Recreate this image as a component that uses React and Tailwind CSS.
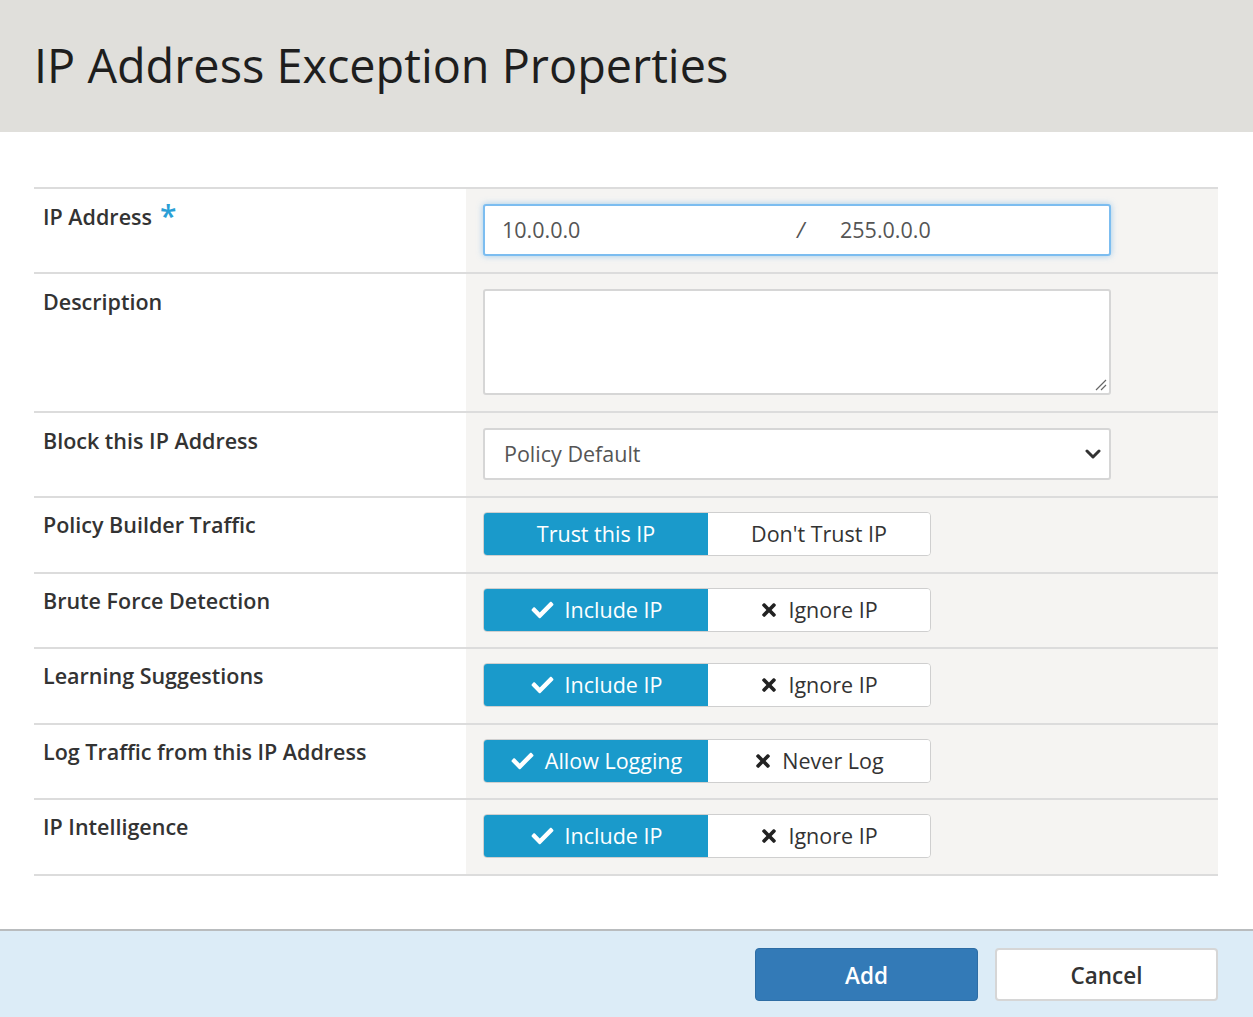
import React from "react";
import { FaCheck, FaTimes } from "react-icons/fa";

const rows = [
  { label: "Policy Builder Traffic", on: "Trust this IP", off: "Don't Trust IP", icons: false },
  { label: "Brute Force Detection", on: "Include IP", off: "Ignore IP", icons: true },
  { label: "Learning Suggestions", on: "Include IP", off: "Ignore IP", icons: true },
  { label: "Log Traffic from this IP Address", on: "Allow Logging", off: "Never Log", icons: true },
  { label: "IP Intelligence", on: "Include IP", off: "Ignore IP", icons: true },
];

function Row({ label, required, children }) {
  return (
    <div className="flex border-t-2 border-[#dcdcdc]">
      <div className="w-[432px] shrink-0 pl-[9px] pt-[14px] text-[21.5px] font-semibold text-[#333] leading-[28px]">
        <span className="relative">
          {label}
          {required && (
            <span className="absolute left-full ml-[8px] top-[-1px] text-[30px] leading-none text-[#2a9fd6]">*</span>
          )}
        </span>
      </div>
      <div className="flex-1 bg-[#f5f4f2] pl-[17px] pt-[15px] pb-[16px]">{children}</div>
    </div>
  );
}

function Toggle({ on, off, icons }) {
  return (
    <div className="flex w-[448px] h-[44px] rounded-[4px] border border-[#cfcfcf] overflow-hidden text-[21.5px]">
      <div className="w-[224px] flex items-center justify-center gap-[10px] bg-[#1a9acb] text-white">
        {icons && <FaCheck className="w-[25px] h-[22px]" />}
        <span>{on}</span>
      </div>
      <div className="flex-1 flex items-center justify-center gap-[10px] bg-white text-[#333]">
        {icons && <FaTimes className="w-[18px] h-[20px] text-[#222]" />}
        <span>{off}</span>
      </div>
    </div>
  );
}

export default function App() {
  return (
    <div className="w-[1253px] h-[1017px] bg-white flex flex-col" style={{ fontFamily: "'Open Sans', 'Noto Sans', sans-serif" }}>
      <div className="h-[132px] bg-[#e0dfdb] flex items-center pl-[34px] shrink-0">
        <h1 className="text-[46.8px] text-[#1e1e1e] leading-none pb-[2px]">IP Address Exception Properties</h1>
      </div>
      <div className="flex-1 px-[34px] pt-[55px]">
        <div className="w-[1184px]">
          <Row label="IP Address" required>
            <div className="w-[628px] h-[52px] rounded-[3px] border-2 border-[#7cbdf0] shadow-[0_0_6px_rgba(102,175,233,0.6)] bg-white flex items-center text-[21.5px] text-[#555]">
              <span className="pl-[17px] w-[312px]">10.0.0.0</span>
              <span className="italic w-[43px]">/</span>
              <span>255.0.0.0</span>
            </div>
          </Row>
          <Row label="Description">
            <div className="relative w-[628px] h-[106px] rounded-[3px] border-2 border-[#d6d6d6] bg-white">
              <svg className="absolute right-[2px] bottom-[2px]" width="14" height="14" viewBox="0 0 14 14">
                <path d="M13 3 L3 13 M13 8 L8 13" stroke="#666" strokeWidth="1.2" fill="none" />
              </svg>
            </div>
          </Row>
          <Row label="Block this IP Address">
            <div className="w-[628px] h-[52px] rounded-[3px] border-2 border-[#d6d6d6] bg-white flex items-center justify-between pl-[19px] pr-[8px] text-[21.5px] text-[#555]">
              <span>Policy Default</span>
              <svg width="16" height="11" viewBox="0 0 16 11">
                <path d="M2 2 L8 8 L14 2" stroke="#333" strokeWidth="3" fill="none" strokeLinecap="round" strokeLinejoin="round" />
              </svg>
            </div>
          </Row>
          {rows.map((r, i) => (
            <div key={i} className={"flex border-t-2 border-[#dcdcdc] " + (i === rows.length - 1 ? "border-b-2" : "")}>
              <div className="w-[432px] shrink-0 pl-[9px] pt-[13px] text-[21.5px] font-semibold text-[#333] leading-[28px]">{r.label}</div>
              <div className={"flex-1 bg-[#f5f4f2] pl-[17px] pt-[14px] " + (i % 2 === 0 ? "pb-[16px]" : "pb-[15px]")}>
                <Toggle on={r.on} off={r.off} icons={r.icons} />
              </div>
            </div>
          ))}
        </div>
      </div>
      <div className="h-[88px] shrink-0 border-t-2 border-[#b9bcbe] bg-[#dcecf7] flex items-center justify-end gap-[17px] pr-[35px]">
        <button className="w-[223px] h-[53px] rounded-[4px] bg-[#337ab7] border border-[#2e6da4] text-white text-[22.5px] font-semibold pt-[3px]">Add</button>
        <button className="w-[223px] h-[53px] rounded-[4px] bg-white border-2 border-[#d6d6d6] text-[#333] text-[22.5px] font-semibold pt-[3px]">Cancel</button>
      </div>
    </div>
  );
}
